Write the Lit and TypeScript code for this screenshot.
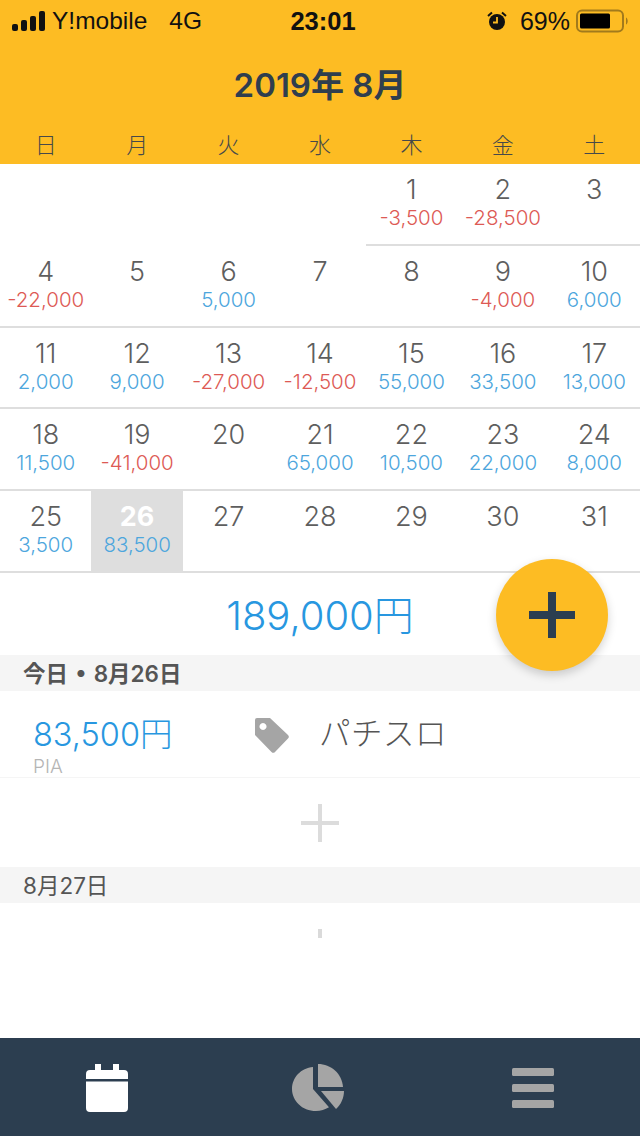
import { LitElement, html, css } from "lit";
import { customElement } from "lit/decorators.js";

const vals: Record<number, number> = {
  1: -3500, 2: -28500, 4: -22000, 6: 5000, 9: -4000, 10: 6000, 11: 2000, 12: 9000, 13: -27000, 14: -12500,
  15: 55000, 16: 33500, 17: 13000, 18: 11500, 19: -41000, 21: 65000, 22: 10500, 23: 22000, 24: 8000, 25: 3500, 26: 83500,
};
const fmt = (n: number) => (n < 0 ? "-" : "") + Math.abs(n).toLocaleString("en-US");

@customElement("app-root")
export class AppRoot extends LitElement {
  static styles = css`
    :host { display: block; width: 640px; height: 1136px; position: relative; overflow: hidden; background: #fff;
      font-family: Inter, "Noto Sans CJK JP", sans-serif; color: #555; }
    .page { display: flex; flex-direction: column; height: 1136px; }
    .top { background: #fdbc23; height: 164px; display: flex; flex-direction: column; flex: none; }
    .status { height: 42px; display: flex; align-items: center; justify-content: space-between; padding: 0 10px 0 12px; color: #111; font-size: 24.5px; position: relative; font-family: "Liberation Sans", sans-serif; }
    .left, .right { display: flex; align-items: center; }
    .carrier { margin-left: 4px; }
    .net { margin-left: 22px; }
    .time { position: absolute; left: 6px; right: 0; text-align: center; font-weight: 700; font-size: 25.5px; }
    .pct { margin: 0 6px 0 13px; font-size: 25px; }
    .title { flex: none; text-align: center; font-size: 33px; line-height: 86px; font-weight: 600; color: #2f3e4e; height: 88px; }
    .weeks { display: grid; grid-template-columns: repeat(7, 1fr); font-size: 22px; line-height: 30px; text-align: center; color: #46494a; font-weight: 300; }
    .cal { display: grid; grid-template-columns: repeat(7, 1fr); grid-auto-rows: 81.8px; flex: none; }
    .cell { border-bottom: 2px solid #dedede; text-align: center; box-sizing: border-box; padding-top: 8px; }
    .cell.empty { border-bottom-color: transparent; }
    .cell.sel { background: #dedede; }
    .num { font-size: 27px; font-weight: 300; line-height: 35px; color: #5e5e5e; }
    .sel .num { color: #fff; font-weight: 700; }
    .val { font-size: 20.5px; font-weight: 300; line-height: 22px; }
    .pos { color: #4da6dd; }
    .neg { color: #dd5a55; }
    .total { height: 82px; flex: none; text-align: center; font-size: 40px; line-height: 85px; color: #2897e0; font-weight: 300; }
    .sec { height: 36px; flex: none; background: #f5f5f5; padding-left: 23px; font-size: 22.5px; line-height: 37px; color: #555; }
    .sec.b { font-weight: 600; word-spacing: 1.5px; }
    .item { height: 87px; flex: none; box-sizing: border-box; border-bottom: 1px solid #f5f5f5; display: flex; align-items: flex-start; position: relative; }
    .amt { width: 221px; flex: none; padding-left: 33px; box-sizing: border-box; font-size: 32.5px; line-height: 38px; padding-top: 25px; color: #2897e0; font-weight: 300; position: relative; }
    .sub { font-size: 19px; line-height: 20px; color: #b5b5b5; font-weight: 300; margin-top: 3px; }
    .tag { margin-top: 26px; margin-left: 33px; width: 36px; height: 36px; flex: none; }
    .cat { margin-left: 29px; margin-top: 22px; font-size: 31.5px; line-height: 42px; color: #555; font-weight: 300; letter-spacing: .5px; }
    .add { height: 89px; flex: none; display: flex; align-items: center; justify-content: center; padding-top: 2px; box-sizing: border-box; }
    .rest { flex: 1; display: flex; justify-content: center; padding-top: 26px; box-sizing: border-box; }
    .tick { width: 4px; height: 9px; background: #dadada; }
    .tabs { height: 98px; flex: none; background: #2c3e50; display: grid; grid-template-columns: repeat(3, 1fr); align-items: center; justify-items: center; padding-top: 2px; box-sizing: border-box; }
    .fab { position: absolute; left: 496px; top: 559px; width: 112px; height: 112px; border-radius: 50%; background: #fdbc23; box-shadow: 0 4px 10px rgba(0,0,0,.18); display: flex; align-items: center; justify-content: center; }
    svg { display: block; }
    .pie { margin-left: -3px; }
  `;

  private cell(d: number | null) {
    if (d === null) return html`<div class="cell empty"></div>`;
    const v = vals[d];
    return html`<div class="cell ${d === 26 ? "sel" : ""}">
      <div class="num">${d}</div>
      ${v !== undefined ? html`<div class="val ${v < 0 ? "neg" : "pos"}">${fmt(v)}</div>` : ""}
    </div>`;
  }

  render() {
    const days: (number | null)[] = [null, null, null, null];
    for (let i = 1; i <= 31; i++) days.push(i);
    return html`<div class="page">
      <div class="top">
        <div class="status">
          <div class="left">
            <svg width="36" height="20" viewBox="0 0 36 20" fill="#111">
              <rect x="0" y="13" width="6" height="7" rx="2"/><rect x="9" y="9" width="6" height="11" rx="2"/>
              <rect x="18" y="5" width="6" height="15" rx="2"/><rect x="27" y="0" width="6" height="20" rx="2"/>
            </svg>
            <span class="carrier">Y!mobile</span><span class="net">4G</span>
          </div>
          <div class="time">23:01</div>
          <div class="right">
            <svg width="20" height="20" viewBox="0 0 20 20">
              <circle cx="10" cy="11" r="8" fill="#111"/><path d="M10 6v5.5H6" stroke="#fdbc23" stroke-width="1.8" fill="none"/>
              <path d="M1 5l4-3.5M19 5l-4-3.5" stroke="#111" stroke-width="2" fill="none"/>
            </svg>
            <span class="pct">69%</span>
            <svg width="54" height="24" viewBox="0 0 54 24">
              <rect x="1" y="1.5" width="46" height="21" rx="5" fill="none" stroke="#a27a1c" stroke-width="2"/>
              <rect x="4" y="4.5" width="30" height="15" rx="1.500" fill="#000"/>
              <path d="M50 8.500c2 .5 2.500 6 0 7z" fill="#a27a1c"/>
            </svg>
          </div>
        </div>
        <div class="title">2019年 8月</div>
        <div class="weeks">${["日", "月", "火", "水", "木", "金", "土"].map((w) => html`<div>${w}</div>`)}</div>
      </div>
      <div class="cal">${days.map((d) => this.cell(d))}</div>
      <div class="total">189,000円</div>
      <div class="sec b">今日 • 8月26日</div>
      <div class="item">
        <div class="amt">83,500円<div class="sub">PIA</div></div>
        <svg class="tag" viewBox="0 0 36 36"><path fill-rule="evenodd" fill="#a5a5a5" d="M1 3a2 2 0 0 1 2-2h13l18 17a2.500 2.500 0 0 1 0 3.500L21 35a2.500 2.500 0 0 1-3.500 0L1 18zM9 6a3.500 3.500 0 1 0 .01 0z"/></svg>
        <div class="cat">パチスロ</div>
      </div>
      <div class="add">
        <svg width="38" height="38" viewBox="0 0 38 38"><path d="M19 0v38M0 19h38" stroke="#dcdcdc" stroke-width="4"/></svg>
      </div>
      <div class="sec">8月27日</div>
      <div class="rest"><div class="tick"></div></div>
      <div class="tabs">
        <svg width="42" height="48" viewBox="0 0 42 48" fill="#fff">
          <path d="M9 0h6v6h12V0h6v6h5a4 4 0 0 1 4 4v5H0v-5a4 4 0 0 1 4-4h5zM0 17.500h42V44a4 4 0 0 1-4 4H4a4 4 0 0 1-4-4z"/>
        </svg>
        <svg class="pie" width="54" height="48" viewBox="0 0 54 50" preserveAspectRatio="none" fill="#a5a5a5">
          <path d="M22 3v23l16 19a25 25 0 0 1-13 4C11 49 1 38 1 26 1 14 10 4 22 3z"/>
          <path d="M27 0c13 0 24 10 25 24H27z"/>
          <path d="M30 28h23c0 7-3 14-8 19z"/>
        </svg>
        <svg width="42" height="40" viewBox="0 0 42 40" fill="#a5a5a5">
          <rect width="42" height="8" rx="1.500"/><rect y="16" width="42" height="8" rx="1.500"/><rect y="32" width="42" height="8" rx="1.500"/>
        </svg>
      </div>
    </div>
    <div class="fab">
      <svg width="46" height="46" viewBox="0 0 46 46"><path d="M23 0v46M0 23h46" stroke="#2c3e50" stroke-width="8"/></svg>
    </div>`;
  }
}
